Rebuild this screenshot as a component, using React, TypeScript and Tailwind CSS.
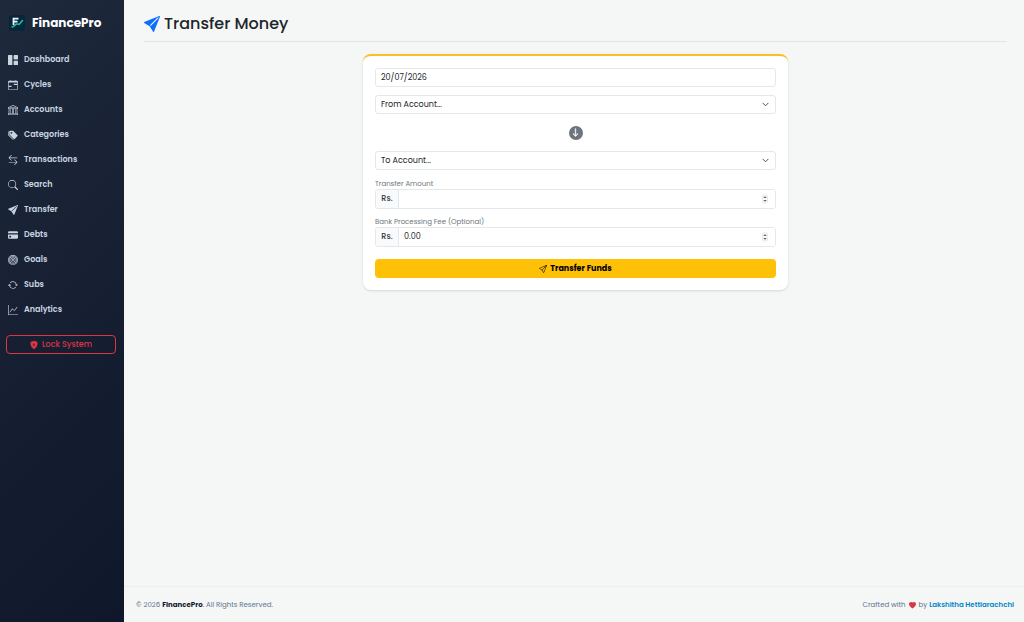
import React from 'react';
import {
  BsArrowDown,
  BsArrowLeftRight,
  BsArrowRepeat,
  BsBank,
  BsBullseye,
  BsCalendarRange,
  BsCreditCardFill,
  BsGraphUp,
  BsGrid1X2Fill,
  BsHeartFill,
  BsSearch,
  BsSend,
  BsSendFill,
  BsShieldLockFill,
  BsTagsFill,
} from 'react-icons/bs';
import type { IconType } from 'react-icons';

interface NavItem {
  label: string;
  icon: IconType;
}

const navItems: NavItem[] = [
  { label: 'Dashboard', icon: BsGrid1X2Fill },
  { label: 'Cycles', icon: BsCalendarRange },
  { label: 'Accounts', icon: BsBank },
  { label: 'Categories', icon: BsTagsFill },
  { label: 'Transactions', icon: BsArrowLeftRight },
  { label: 'Search', icon: BsSearch },
  { label: 'Transfer', icon: BsSendFill },
  { label: 'Debts', icon: BsCreditCardFill },
  { label: 'Goals', icon: BsBullseye },
  { label: 'Subs', icon: BsArrowRepeat },
  { label: 'Analytics', icon: BsGraphUp },
];

const Logo = () => (
  <svg viewBox="0 0 32 32" className="size-4" aria-hidden="true">
    <rect width="32" height="32" rx="6" fill="#06263f" />
    <path d="M9 20V7h10M9 13h8" fill="none" stroke="#f1f5f9" strokeWidth="3.5" />
    <path
      d="M6 24c5 0 5-5 9-6 3-1 4 2 6 0l6-7"
      fill="none"
      stroke="#20c997"
      strokeWidth="3"
      strokeLinecap="round"
    />
  </svg>
);

const Sidebar = () => (
  <aside className="w-[124px] shrink-0 bg-linear-135 from-[#1e293b] to-[#0f172a]">
    <a href="#" className="flex items-center gap-[7px] px-[9px] pt-[14px] text-white">
      <Logo />
      <span className="text-[12px] leading-[18px] font-bold">FinancePro</span>
    </a>
    <nav className="mt-[15px] flex flex-col">
      {navItems.map(({ label, icon: Icon }) => (
        <a
          key={label}
          href="#"
          className="flex h-[25px] items-center gap-[6px] px-2 text-[8px] font-semibold text-slate-300"
        >
          <Icon className="size-[10px]" />
          {label}
        </a>
      ))}
    </nav>
    <button
      type="button"
      className="mx-[6px] mt-[13px] flex h-[19px] w-[110px] items-center justify-center gap-1 rounded-[4px] border border-[#dc3545] text-[8px] font-medium text-[#dc3545]"
    >
      <BsShieldLockFill className="size-2" />
      Lock System
    </button>
  </aside>
);

interface AccountSelectProps {
  id: string;
  label: string;
}

const AccountSelect: React.FC<AccountSelectProps> = ({ id, label }) => (
  <div className="relative">
    <select
      id={id}
      aria-label={label}
      className="block h-[19px] w-full appearance-none rounded-[3px] border border-[#e5e8eb] bg-white px-[5px] text-[8px] text-[#212529]"
    >
      <option>{label}...</option>
    </select>
    <svg
      viewBox="0 0 16 16"
      className="pointer-events-none absolute top-[6px] right-[7px] size-[7px]"
      fill="none"
      stroke="#343a40"
      strokeWidth="2"
      strokeLinecap="round"
      strokeLinejoin="round"
      aria-hidden="true"
    >
      <path d="m2 5 6 6 6-6" />
    </svg>
  </div>
);

interface AmountFieldProps {
  id: string;
  label: string;
  value?: string;
}

const AmountField: React.FC<AmountFieldProps> = ({ id, label, value }) => (
  <div>
    <label htmlFor={id} className="block h-3 text-[7px] leading-[14px] text-[#6c757d]">
      {label}
    </label>
    <div className="relative flex h-5 overflow-hidden rounded-[3px] border border-[#e5e8eb]">
      <span className="flex w-[23px] items-center justify-center border-r border-[#e5e8eb] bg-[#f8fafc] text-[8px] font-medium text-[#343a40]">
        Rs.
      </span>
      <input
        id={id}
        type="number"
        step="0.01"
        defaultValue={value}
        className="min-w-0 flex-1 appearance-none bg-white px-[5px] text-[8px] text-[#212529] [-moz-appearance:textfield] [&::-webkit-inner-spin-button]:appearance-none"
      />
      <svg
        viewBox="0 0 12 18"
        className="pointer-events-none absolute top-1 right-[7px] h-[10px] w-[6px]"
        fill="none"
        aria-hidden="true"
      >
        <rect x="0.5" y="0.5" width="11" height="17" rx="5" fill="#fafafa" stroke="#d4d4d4" />
        <path d="M3.5 7 6 4.5 8.500 7M3.500 11 6 13.500 8.500 11" stroke="#222" strokeWidth="1.8" />
      </svg>
    </div>
  </div>
);

const TransferForm = () => (
  <form className="mx-auto mt-3 w-full max-w-[425px] rounded-[8px] border-t-2 border-[#fbbf24] bg-white p-3 shadow-sm">
    <input
      type="text"
      aria-label="Date"
      defaultValue="20/07/2026"
      className="mb-2 block h-[19px] w-full rounded-[3px] border border-[#e5e8eb] bg-white px-[5px] text-[8px] text-[#212529]"
    />
    <AccountSelect id="from" label="From Account" />
    <div className="flex h-[37px] items-center justify-center">
      <span className="flex size-[14px] items-center justify-center rounded-full bg-[#6c757d] text-white">
        <BsArrowDown className="size-[9px]" strokeWidth="1" />
      </span>
    </div>
    <AccountSelect id="to" label="To Account" />
    <div className="mt-[7px] flex flex-col gap-[6px]">
      <AmountField id="amount" label="Transfer Amount" />
      <AmountField id="fee" label="Bank Processing Fee (Optional)" value="0.00" />
    </div>
    <button
      type="submit"
      className="mt-3 flex h-[19px] w-full items-center justify-center gap-[3px] rounded-[4px] bg-[#ffc107] text-[8px] font-bold text-black"
    >
      <BsSend className="size-2" />
      Transfer Funds
    </button>
  </form>
);

const Footer = () => (
  <footer className="flex h-9 items-center justify-between border-t border-[#eceff0] pt-px pr-[10px] pl-3 text-[7px] text-slate-500">
    <p>
      © 2026 <strong className="font-bold text-slate-900">FinancePro</strong>. All Rights Reserved.
    </p>
    <p className="flex items-center">
      Crafted with
      <BsHeartFill className="mx-[3px] size-[7px] text-[#dc3545]" />
      by&nbsp;
      <a href="#" className="font-semibold text-[#0284c7]">
        Lakshitha Hettiarachchi
      </a>
    </p>
  </footer>
);

const App = () => (
  <div className="flex min-h-screen bg-[#f4f7f6] font-[Poppins,Inter,sans-serif]">
    <Sidebar />
    <div className="flex min-w-0 flex-1 flex-col">
      <main className="flex-1 pr-[17px] pl-5">
        <h1 className="flex h-[42px] items-center gap-1 border-b border-[#e2e5e6] pt-[6px] text-[16px] font-medium text-[#212529]">
          <BsSendFill className="size-4 text-[#0d6efd]" />
          Transfer Money
        </h1>
        <TransferForm />
      </main>
      <Footer />
    </div>
  </div>
);

export default App;
